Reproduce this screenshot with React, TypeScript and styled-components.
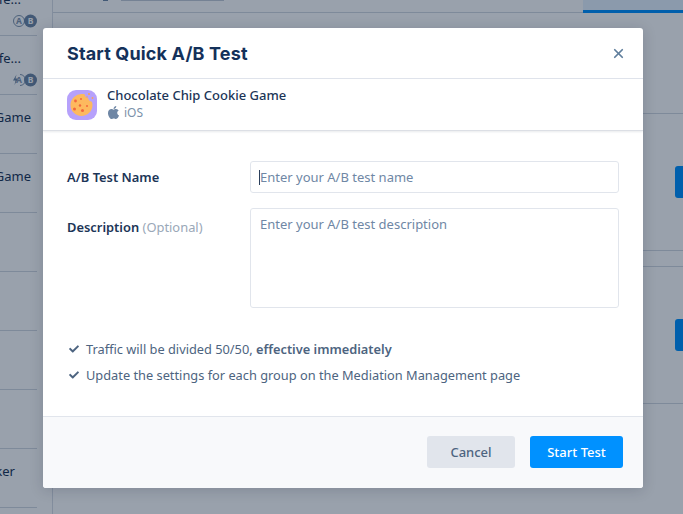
import React from "react";
import styled, { createGlobalStyle } from "styled-components";
import { FaApple, FaCheck } from "react-icons/fa";
import { X } from "lucide-react";

const GlobalStyle = createGlobalStyle`
  html, body {
    margin: 0;
    padding: 0;
    height: 100%;
    overflow: hidden;
    background: #fff;
  }
  * {
    box-sizing: border-box;
  }
`;

const Page = styled.div`
  position: relative;
  display: flex;
  width: 683px;
  height: 514px;
  overflow: hidden;
  font-family: "Noto Sans", "Open Sans", sans-serif;
`;

const Sidebar = styled.div`
  flex: none;
  width: 53px;
  margin-top: -23px;
  padding-right: 15px;
  border-right: 1px solid #d9dee6;
`;

const SideRow = styled.div`
  height: 59px;
  border-bottom: 1px solid #d3d9e2;
  overflow: hidden;
`;

const SideName = styled.div<{ $end: number }>`
  display: flex;
  justify-content: flex-end;
  padding: 13px ${(p) => p.$end}px 0 0;
  height: 33px;
  font-size: 13px;
  line-height: 19px;
  color: #1c3557;
  white-space: nowrap;
`;

const Badges = styled.div`
  display: flex;
  justify-content: flex-end;
  align-items: center;
  margin-top: 4px;
`;

const Main = styled.div`
  flex: 1;
  min-width: 0;
`;

const TopStrip = styled.div`
  display: flex;
  align-items: flex-start;
  height: 13px;
  border-bottom: 1px solid #d3d9e2;
`;

const TopIcon = styled.div`
  width: 5px;
  height: 1px;
  margin-left: 50px;
  background: #6f87a5;
`;

const TopField = styled.div`
  width: 103px;
  height: 1px;
  margin-left: 13px;
  background: #c4ccd8;
`;

const ActiveTab = styled.div`
  width: 100px;
  height: 13px;
  margin-left: auto;
  border-bottom: 3px solid #0091ff;
  background: #e8f4ff;
`;

const ContentRow = styled.div<{ $height: number }>`
  display: flex;
  align-items: center;
  justify-content: flex-end;
  height: ${(p) => p.$height}px;
  border-bottom: 1px solid #d3d9e2;
`;

const RowAction = styled.div`
  width: 8px;
  height: 32px;
  border-radius: 3px 0 0 3px;
  background: #0091ff;
`;

const Backdrop = styled.div`
  position: absolute;
  inset: 0;
  background: rgba(0, 20, 47, 0.4);
`;

const Modal = styled.div`
  position: absolute;
  left: 43px;
  top: 28px;
  display: flex;
  flex-direction: column;
  width: 600px;
  height: 460px;
  border-radius: 3px;
  background: #fff;
  overflow: hidden;
  box-shadow: 0 2px 14px rgba(20, 30, 50, 0.18);
`;

const ModalHeader = styled.header`
  flex: none;
  display: flex;
  align-items: center;
  justify-content: space-between;
  height: 51px;
  padding: 1px 17px 0 24px;
  border-bottom: 1px solid #e0e4ec;
`;

const Title = styled.h1`
  margin: 0;
  font-family: Inter, "Liberation Sans", sans-serif;
  font-size: 18px;
  font-weight: 700;
  line-height: 26px;
  letter-spacing: 0.15px;
  color: #14315a;
`;

const CloseButton = styled.button`
  display: flex;
  padding: 0;
  border: 0;
  background: none;
  color: #5f7e9c;
`;

const AppBar = styled.div`
  flex: none;
  display: flex;
  align-items: center;
  gap: 10px;
  height: 52px;
  padding: 0 24px;
  border-bottom: 1px solid #dcdfe5;
  box-shadow: 0 1px 2px rgba(30, 45, 70, 0.1);
`;

const AppInfo = styled.div`
  display: flex;
  flex-direction: column;
  padding-bottom: 3px;
`;

const AppName = styled.div`
  font-size: 13px;
  font-weight: 500;
  line-height: 19px;
  color: #1c3557;
`;

const Platform = styled.div`
  display: flex;
  align-items: center;
  gap: 3px;
  font-size: 12px;
  line-height: 16px;
  color: #7b91aa;

  svg {
    margin-left: -1px;
    color: #6f87a5;
  }
`;

const Body = styled.div`
  flex: 1;
  display: flex;
  flex-direction: column;
  padding: 30px 24px 0;
`;

const Field = styled.div<{ $gap: number }>`
  display: flex;
  margin-bottom: ${(p) => p.$gap}px;
`;

const Label = styled.label<{ $top: number }>`
  flex: none;
  width: 183px;
  padding-top: ${(p) => p.$top}px;
  font-size: 12.9px;
  font-weight: 600;
  line-height: 18px;
  color: #1c3557;
`;

const Optional = styled.span`
  font-weight: 400;
  color: #9aa8b8;
`;

const InputWrap = styled.div`
  position: relative;
  width: 369px;
`;

const Caret = styled.span`
  position: absolute;
  left: 9px;
  top: 9px;
  width: 1px;
  height: 15px;
  background: #2b3f5c;
`;

const fieldStyles = `
  display: block;
  width: 100%;
  padding: 0 9px;
  border: 1px solid #e1e5ec;
  border-radius: 3px;
  outline: none;
  background: #fff;
  font-family: "Noto Sans", "Open Sans", sans-serif;
  font-size: 13px;
  color: #1c3557;
  &::placeholder {
    color: #6f87a5;
    opacity: 1;
  }
`;

const TextInput = styled.input`
  ${fieldStyles}
  height: 32px;
`;

const TextArea = styled.textarea`
  ${fieldStyles}
  height: 100px;
  padding-top: 6px;
  line-height: 18px;
  resize: none;
`;

const Notes = styled.ul`
  display: flex;
  flex-direction: column;
  gap: 8px;
  margin: 32px 0 0;
  padding: 0;
  list-style: none;
`;

const Note = styled.li`
  display: flex;
  align-items: center;
  gap: 7px;
  padding-left: 2px;
  font-size: 12.8px;
  line-height: 18px;
  color: #4d6480;

  svg {
    flex: none;
    color: #4d6480;
  }

  b {
    font-weight: 600;
  }
`;

const Footer = styled.footer`
  flex: none;
  display: flex;
  align-items: center;
  justify-content: flex-end;
  gap: 15px;
  height: 72px;
  padding: 0 20px 2px 0;
  border-top: 1px solid #e1e5ec;
  background: #f8f9fb;
`;

const Button = styled.button<{ $primary?: boolean }>`
  width: ${(p) => (p.$primary ? 93 : 88)}px;
  height: 32px;
  padding: 0;
  border: 0;
  border-radius: 3px;
  background: ${(p) => (p.$primary ? "#0091ff" : "#e1e5ec")};
  font-family: "Noto Sans", "Open Sans", sans-serif;
  font-size: 13px;
  font-weight: 500;
  color: ${(p) => (p.$primary ? "#fff" : "#4d6480")};
`;

const CookieIcon = () => (
  <svg width="30" height="30" viewBox="0 0 30 30" aria-hidden="true">
    <rect width="30" height="30" rx="9" fill="#b6a1fb" />
    <path
      d="M15 4c1.100 0 2 .1 2.900.4.1 2.200 1.300 3.500 3.200 3.700.3 2.200 1.600 3.500 3.700 3.600.5 1 .7 2.200.7 3.300A11 11 0 1 1 15 4z"
      fill="#fdb95e"
    />
    <circle cx="8.500" cy="11" r="1.400" fill="#f2673c" />
    <circle cx="14" cy="9" r="1" fill="#f2673c" />
    <circle cx="7.500" cy="19" r="1.500" fill="#f2673c" />
    <circle cx="13" cy="15.500" r="1.200" fill="#f2673c" />
    <circle cx="15.500" cy="20.500" r="1.500" fill="#f2673c" />
    <circle cx="20" cy="16" r="1" fill="#f2673c" />
    <circle cx="22" cy="4" r="1.100" fill="#f6a25e" />
    <circle cx="25.500" cy="8" r="0.900" fill="#f6a25e" />
    <circle cx="20" cy="7" r="0.800" fill="#f6a25e" />
  </svg>
);

const AbBadge = ({ bolt }: { bolt?: boolean }) => (
  <Badges>
    <svg width="26" height="14" viewBox="0 0 26 14" aria-hidden="true">
      {bolt ? (
        <>
          <path d="M5.500 1.500 2 7.500h2.500l-1 4.500 3.500-6.500H4.500z" fill="#6f87a5" />
          <path d="M9 1.500a5.500 5.500 0 0 1 0 11" fill="none" stroke="#8296ae" />
        </>
      ) : (
        <circle cx="8" cy="7" r="5.500" fill="none" stroke="#8296ae" />
      )}
      <circle cx="19.500" cy="7" r="6.500" fill="#6f87a5" />
      <text x="8" y="10" fontSize="8.500" fontWeight="700" textAnchor="middle" fill="#8296ae">
        A
      </text>
      <text x="19.500" y="10" fontSize="8.500" fontWeight="700" textAnchor="middle" fill="#fff">
        B
      </text>
    </svg>
  </Badges>
);

const sideRows = [
  { name: "Choco Wafe...", end: 16, badge: "plain" },
  { name: "Choco Wafe...", end: 16, badge: "bolt" },
  { name: "Cookie Game", end: 6 },
  { name: "Cookie Game", end: 6 },
  { name: "" },
  { name: "" },
  { name: "" },
  { name: "" },
  { name: "Cookie Maker", end: 22 },
];

const App: React.FC = () => {
  return (
    <Page>
      <GlobalStyle />
      <Sidebar>
        {sideRows.map((row, i) => (
          <SideRow key={i}>
            <SideName $end={row.end ?? 0}>{row.name}</SideName>
            {row.badge && <AbBadge bolt={row.badge === "bolt"} />}
          </SideRow>
        ))}
      </Sidebar>
      <Main>
        <TopStrip>
          <TopIcon />
          <TopField />
          <ActiveTab />
        </TopStrip>
        <ContentRow $height={101} />
        <ContentRow $height={137}>
          <RowAction />
        </ContentRow>
        <ContentRow $height={16} />
        <ContentRow $height={137}>
          <RowAction />
        </ContentRow>
      </Main>
      <Backdrop />
      <Modal>
        <ModalHeader>
          <Title>Start Quick A/B Test</Title>
          <CloseButton aria-label="Close">
            <X size={15} strokeWidth={2.8} />
          </CloseButton>
        </ModalHeader>
        <AppBar>
          <CookieIcon />
          <AppInfo>
            <AppName>Chocolate Chip Cookie Game</AppName>
            <Platform>
              <FaApple size={15} />
              iOS
            </Platform>
          </AppInfo>
        </AppBar>
        <Body>
          <Field $gap={15}>
            <Label $top={7}>A/B Test Name</Label>
            <InputWrap>
              <TextInput placeholder="Enter your A/B test name" />
              <Caret />
            </InputWrap>
          </Field>
          <Field $gap={0}>
            <Label $top={10}>
              Description <Optional>(Optional)</Optional>
            </Label>
            <InputWrap>
              <TextArea placeholder="Enter your A/B test description" />
            </InputWrap>
          </Field>
          <Notes>
            <Note>
              <FaCheck size={10} />
              <span>
                Traffic will be divided 50/50, <b>effective immediately</b>
              </span>
            </Note>
            <Note>
              <FaCheck size={10} />
              <span>Update the settings for each group on the Mediation Management page</span>
            </Note>
          </Notes>
        </Body>
        <Footer>
          <Button>Cancel</Button>
          <Button $primary>Start Test</Button>
        </Footer>
      </Modal>
    </Page>
  );
};

export default App;
